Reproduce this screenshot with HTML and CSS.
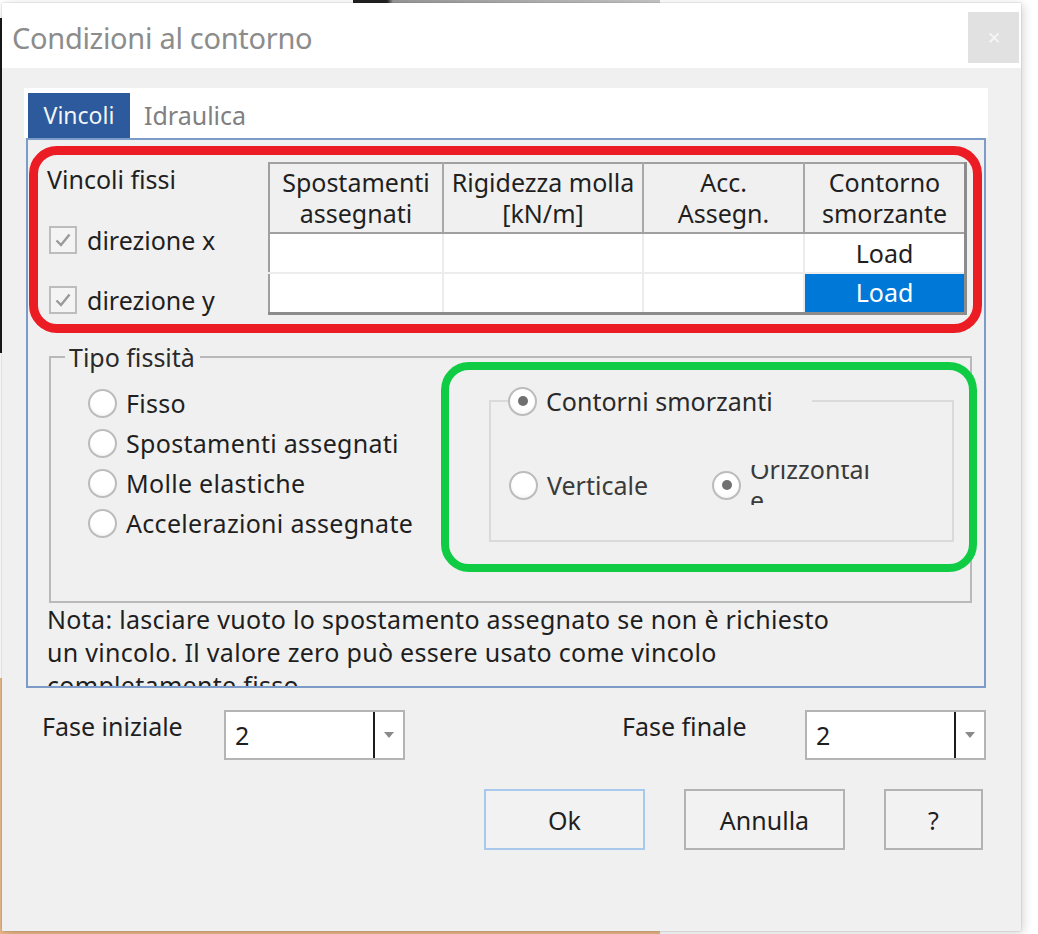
FILE: index.html
```html
<!DOCTYPE html>
<html lang="it">
<head>
    <meta charset="UTF-8">
    <title>Condizioni al contorno</title>
    <link rel="stylesheet" href="styles.css">
</head>
<body>

    <!-- bits of the desktop peeking out behind the dialog -->
    <div class="desk-bar"></div>
    <div class="desk-edge-dark"></div>
    <div class="desk-edge-warm"></div>
    <div class="desk-bottom-warm"></div>

    <div class="window">
        <div class="titlebar">
            <div class="title">Condizioni al contorno</div>
            <div class="close">&#x2715;</div>
        </div>

        <div class="client">
            <div class="tabstrip">
                <div class="tab active">Vincoli</div>
                <div class="tab">Idraulica</div>
            </div>

            <div class="panel">
                <div class="fixed-row">
                    <div class="fixed-left">
                        <div class="fixed-title">Vincoli fissi</div>
                        <label class="check">
                            <span class="checkbox"><svg viewBox="0 0 20 20" width="20" height="20"><path d="M3.5 10.5 L8 15 L16.5 4.5" fill="none" stroke="#9a9a9a" stroke-width="2.4"/></svg></span>
                            direzione x
                        </label>
                        <label class="check">
                            <span class="checkbox"><svg viewBox="0 0 20 20" width="20" height="20"><path d="M3.5 10.5 L8 15 L16.5 4.5" fill="none" stroke="#9a9a9a" stroke-width="2.4"/></svg></span>
                            direzione y
                        </label>
                    </div>

                    <table class="grid">
                        <tr class="head">
                            <th class="c1">Spostamenti<br>assegnati</th>
                            <th class="c2">Rigidezza molla<br>[kN/m]</th>
                            <th class="c3">Acc.<br>Assegn.</th>
                            <th class="c4">Contorno<br>smorzante</th>
                        </tr>
                        <tr class="r1">
                            <td></td><td></td><td></td><td>Load</td>
                        </tr>
                        <tr class="r2">
                            <td></td><td></td><td></td><td class="selected">Load</td>
                        </tr>
                    </table>
                </div>

                <fieldset class="group">
                    <legend>Tipo fissità</legend>
                    <div class="group-body">
                        <div class="radios">
                            <div class="radio-row"><span class="radio"></span>Fisso</div>
                            <div class="radio-row"><span class="radio"></span>Spostamenti assegnati</div>
                            <div class="radio-row"><span class="radio"></span>Molle elastiche</div>
                            <div class="radio-row"><span class="radio"></span>Accelerazioni assegnate</div>
                        </div>

                        <fieldset class="subgroup">
                            <legend><span class="radio on"></span>Contorni smorzanti</legend>
                            <div class="sub-row">
                                <div class="radio-row vert"><span class="radio"></span>Verticale</div>
                                <div class="radio-row oriz">
                                    <span class="radio on"></span>
                                    <span class="clip-label"><span class="clip-text">Orizzontal<br>e</span></span>
                                </div>
                            </div>
                        </fieldset>
                    </div>
                </fieldset>

                <p class="note">Nota: lasciare vuoto lo spostamento assegnato se non è richiesto<br>un vincolo. Il valore zero può essere usato come vincolo<br>completamente fisso</p>

                <div class="mark red"></div>
                <div class="mark green"></div>
            </div>

            <div class="phase-row">
                <div class="phase-label first">Fase iniziale</div>
                <div class="combo">
                    <span class="combo-value">2</span>
                    <span class="combo-arrow"><svg viewBox="0 0 10 6" width="10" height="6"><path d="M0 0 H10 L5 6 Z" fill="#8a8a8a"/></svg></span>
                </div>
                <div class="phase-label second">Fase finale</div>
                <div class="combo">
                    <span class="combo-value">2</span>
                    <span class="combo-arrow"><svg viewBox="0 0 10 6" width="10" height="6"><path d="M0 0 H10 L5 6 Z" fill="#8a8a8a"/></svg></span>
                </div>
            </div>

            <div class="buttons">
                <div class="btn default">Ok</div>
                <div class="btn">Annulla</div>
                <div class="btn small">?</div>
            </div>
        </div>
    </div>

</body>
</html>
```

FILE: styles.css
```css
body {
    margin: 0;
    padding: 0;
    background: #ffffff;
    font-family: "Noto Sans", "Open Sans", sans-serif;
    color: #1f1f1f;
    position: relative;
    width: 1038px;
    height: 934px;
    overflow: hidden;
}

.desk-bar {
    position: absolute;
    left: 353px;
    top: 0;
    width: 307px;
    height: 3px;
    background: linear-gradient(to right, #222 0, #222 34px, #9a9a9a 40px, #c8c8c8 100%);
}
.desk-edge-dark {
    position: absolute;
    left: 0;
    top: 18px;
    width: 2px;
    height: 335px;
    background: #1a1a1a;
}
.desk-edge-warm {
    position: absolute;
    left: 0;
    top: 678px;
    width: 3px;
    height: 256px;
    background: #e9b887;
}
.desk-bottom-warm {
    position: absolute;
    left: 0;
    top: 930px;
    width: 660px;
    height: 4px;
    background: #e9b887;
}

.window {
    position: absolute;
    left: 2px;
    top: 3px;
    width: 1019px;
    height: 928px;
    background: #f0f0f0;
    box-shadow: 0 0 1px rgba(0, 0, 0, 0.35), 2px 2px 10px rgba(0, 0, 0, 0.18);
    display: flex;
    flex-direction: column;
}

.titlebar {
    height: 65px;
    background: #ffffff;
    display: flex;
    justify-content: space-between;
    align-items: flex-start;
}
.title {
    margin: 16px 0 0 10px;
    font-size: 29px;
    line-height: 38px;
    color: #8c8c8c;
    letter-spacing: -0.3px;
}
.close {
    width: 51px;
    height: 51px;
    margin: 9px 2px 0 0;
    background: #e1e1e1;
    color: #f6f6f6;
    font-size: 17px;
    display: flex;
    justify-content: center;
    align-items: center;
}

.client {
    flex: 1;
    padding: 20px 33px 0 22px;
    font-size: 25px;
}

/* tab control */
.tabstrip {
    height: 50px;
    background: #ffffff;
    display: flex;
    align-items: flex-end;
}
.tab {
    height: 45px;
    line-height: 45px;
    padding: 0 14px;
    color: #808080;
    font-size: 25px;
}
.tab.active {
    margin-left: 4px;
    width: 102px;
    padding: 0;
    box-sizing: border-box;
    text-align: center;
    background: #2c5a9c;
    color: #f4f4f4;
    font-size: 23px;
}

.panel {
    position: relative;
    height: 546px;
    margin: 0 2px;
    border: 2px solid #7d9bc8;
    background: #f0f0f0;
    padding: 0 0 0 19px;
    overflow: hidden;
}

/* fixed constraints + grid */
.fixed-row {
    display: flex;
    padding-top: 22px;
}
.fixed-left {
    width: 221px;
}
.fixed-title {
    margin-top: 2px;
    line-height: 30px;
}
.check {
    display: flex;
    align-items: center;
    gap: 10px;
    height: 30px;
    margin-top: 30px;
}
.check:first-of-type {
    margin-top: 31px;
}
.checkbox {
    width: 28px;
    height: 28px;
    margin-left: 2px;
    box-sizing: border-box;
    border: 2px solid #bdbdbd;
    background: #f4f4f4;
    display: flex;
    justify-content: center;
    align-items: center;
}

.grid {
    border-collapse: collapse;
    width: 699px;
    border-top: 2px solid #a0a0a0;
    border-left: 2px solid #a0a0a0;
    border-right: 3px solid #8c8c8c;
    border-bottom: 3px solid #8c8c8c;
    font-size: 25px;
    line-height: 31px;
}
.grid th {
    font-weight: normal;
    background: #f0f0f0;
    border-right: 2px solid #a8a8a8;
    border-bottom: 2px solid #a0a0a0;
    height: 68px;
    padding: 0;
    text-align: center;
}
.grid th:last-child {
    border-right: none;
}
.grid .c1 { width: 172px; }
.grid .c2 { width: 198px; }
.grid .c3 { width: 159px; }
.grid td {
    background: #ffffff;
    border-right: 2px solid #ececec;
    border-bottom: 2px solid #ececec;
    text-align: center;
    padding: 0;
}
.grid td:last-child {
    border-right: none;
}
.grid .r1 td { height: 37px; }
.grid .r2 td { height: 38px; border-bottom: none; }
.grid td.selected {
    background: #0078d7;
    color: #ffffff;
}

/* group boxes */
.group {
    margin: 29px 0 0 2px;
    width: 923px;
    height: 259px;
    box-sizing: border-box;
    border: 2px solid #b9b9b9;
    padding: 0;
}
.group legend {
    margin-left: 14px;
    padding: 0 5px 0 4px;
    line-height: 26px;
    color: #2a2a2a;
}
.group-body {
    display: flex;
    padding-top: 13px;
}
.radios {
    width: 401px;
    padding-left: 37px;
    letter-spacing: 0.3px;
}
.radio-row {
    display: flex;
    align-items: center;
    height: 40px;
    gap: 9px;
}
.radio {
    width: 29px;
    height: 29px;
    box-sizing: border-box;
    border-radius: 50%;
    border: 2px solid #bcbcbc;
    background: radial-gradient(circle at 50% 40%, #ffffff 55%, #ececec 100%);
    display: inline-flex;
    justify-content: center;
    align-items: center;
    flex: none;
}
.radio.on::after {
    content: "";
    width: 10px;
    height: 10px;
    border-radius: 50%;
    background: #707070;
}

.subgroup {
    margin: 3px 0 0 0;
    width: 465px;
    height: 156px;
    box-sizing: border-box;
    border: 2px solid #dadada;
    padding: 0;
    color: #3a3a3a;
}
.subgroup legend {
    margin-left: 17px;
    padding: 0 2px 0 0;
    display: flex;
    align-items: center;
    gap: 9px;
    line-height: 30px;
    width: 302px;
}
.sub-row {
    display: flex;
    padding: 49px 0 0 18px;
}
.vert {
    width: 203px;
}
.clip-label {
    display: block;
    height: 40px;
    overflow: hidden;
}
.clip-text {
    display: block;
    margin-top: -11px;
    line-height: 31px;
}

.note {
    margin: 0;
    line-height: 33px;
    font-size: 25px;
    letter-spacing: 0.3px;
    color: #1e1e1e;
}

/* annotation outlines drawn over the dialog */
.mark {
    position: absolute;
    box-sizing: border-box;
    pointer-events: none;
}
.mark.red {
    left: 1px;
    top: 6px;
    width: 953px;
    height: 187px;
    border: 9px solid #ec1c24;
    border-radius: 28px;
}
.mark.green {
    left: 413px;
    top: 222px;
    width: 536px;
    height: 210px;
    border: 8px solid #10cc45;
    border-radius: 28px;
}

/* phase selectors */
.phase-row {
    display: flex;
    align-items: flex-start;
    margin-top: 22px;
}
.phase-label {
    line-height: 30px;
    margin-top: 1px;
}
.phase-label.first {
    margin-left: 18px;
    width: 182px;
}
.phase-label.second {
    margin-left: 217px;
    width: 183px;
}
.combo {
    width: 181px;
    height: 50px;
    box-sizing: border-box;
    border: 2px solid #b4b4b4;
    background: #ffffff;
    display: flex;
}
.combo-value {
    flex: 1;
    padding: 6px 0 0 9px;
    border-right: 2px solid #1c1c1c;
}
.combo-arrow {
    width: 28px;
    display: flex;
    justify-content: center;
    align-items: center;
}

/* dialog buttons */
.buttons {
    display: flex;
    justify-content: flex-end;
    gap: 39px;
    margin-top: 29px;
    padding-right: 5px;
}
.btn {
    width: 161px;
    height: 61px;
    box-sizing: border-box;
    border: 2px solid #b3b3b3;
    background: #f2f2f2;
    display: flex;
    justify-content: center;
    align-items: center;
}
.btn.default {
    border-color: #a8c8ec;
}
.btn.small {
    width: 99px;
}
```
